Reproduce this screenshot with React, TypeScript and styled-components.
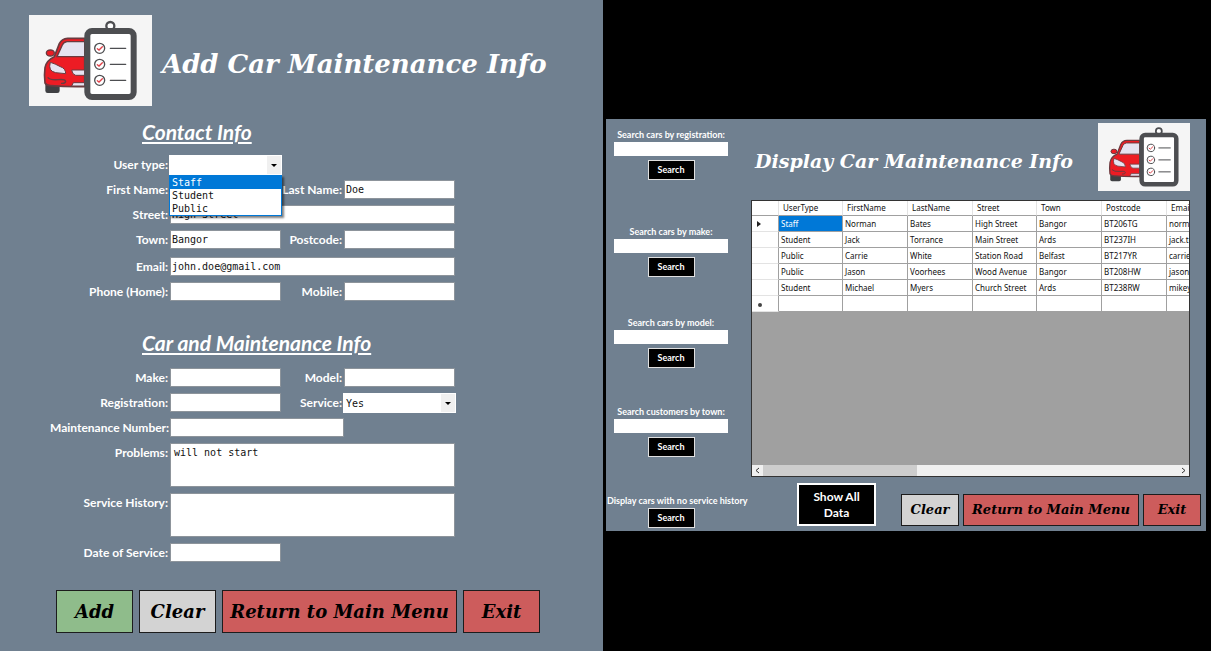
import React from 'react';
import styled, { createGlobalStyle, css } from 'styled-components';

const slate = '#708090';
const labelFont = 'Lato, sans-serif';
const monoFont = "'DejaVu Sans Mono', monospace";
const scriptFont = "'DejaVu Serif', serif";
const gridFont = "'Noto Sans', sans-serif";

const GlobalStyle = createGlobalStyle`
  *, *::before, *::after { box-sizing: border-box; }
  body { margin: 0; background: #000; }
`;

const Page = styled.div`
  display: grid;
  grid-template-columns: minmax(0, 603fr) minmax(0, 608fr);
  min-height: 100vh;
  background: #000;
`;

/* ---------- Shared ---------- */

const LogoSvg = styled.svg<{ $width: number }>`
  display: block;
  flex: none;
  width: ${(p) => p.$width}px;
  height: auto;
  background: #f5f5f5;
`;

const Title = styled.h1<{ $size: number }>`
  margin: 0;
  padding-top: 7px;
  font: italic bold ${(p) => p.$size}px/32px ${scriptFont};
  color: #fff;
  white-space: nowrap;
`;

const tones = { green: '#8fbc8b', grey: '#d3d3d3', red: '#cd5c5c' };

const ScriptButton = styled.button<{ $tone: keyof typeof tones; $width: number; $compact?: boolean }>`
  flex: 0 1 ${(p) => p.$width}px;
  height: ${(p) => (p.$compact ? 32 : 43)}px;
  padding: 0;
  border: 1px solid #1c1c1c;
  background: ${(p) => tones[p.$tone]};
  color: #000;
  font: italic bold ${(p) => (p.$compact ? 13 : 18)}px/20px ${scriptFont};
  white-space: nowrap;
`;

/* ---------- Add form ---------- */

const AddPanel = styled.section`
  padding: 15px 0 18px;
  background: ${slate};
`;

const AddHeader = styled.header`
  display: flex;
  align-items: center;
  gap: 10px;
  padding-left: 29px;
`;

const SectionTitle = styled.h2`
  margin: 0;
  padding-left: 142px;
  font: italic bold 21px/24px Lato, sans-serif;
  color: #fff;
  text-decoration: underline;
  text-decoration-thickness: 2px;
  text-underline-offset: 2px;
`;

const FormSection = styled.form<{ $top: number }>`
  padding-top: ${(p) => p.$top}px;
`;

const Fields = styled.div<{ $top: number }>`
  display: grid;
  grid-template-columns: 120px minmax(0, 1fr) 63px minmax(0, 1fr);
  grid-auto-rows: minmax(19px, auto);
  row-gap: 6px;
  margin: ${(p) => p.$top}px 148px 0 50px;
`;

const Label = styled.label`
  padding-right: 2px;
  font: bold 12px/19px ${labelFont};
  color: #fff;
  text-align: right;
  white-space: nowrap;
`;

const field = css`
  display: block;
  width: 100%;
  border: 1px solid #8d949b;
  border-radius: 0;
  background: #fff;
  color: #111;
  font: 10px/17px ${monoFont};
  outline: none;
`;

const Input = styled.input<{ $span?: number }>`
  ${field}
  grid-column: span ${(p) => p.$span ?? 1};
  height: 19px;
  padding: 0 1px;
`;

const TextArea = styled.textarea`
  ${field}
  grid-column: span 3;
  height: 44px;
  padding: 0 3px;
  resize: none;
`;

const SelectBox = styled.div`
  position: relative;
  margin: 0 -1px;
`;

const Select = styled.select`
  ${field}
  appearance: none;
  height: 20px;
  padding: 0 16px 0 2px;
  border-color: #fff;
`;

const Arrow = styled.svg`
  position: absolute;
  top: 1px;
  right: 1px;
  width: 14px;
  height: 18px;
  background: #f0f0f0;
  pointer-events: none;
`;

const OptionList = styled.ul`
  position: absolute;
  z-index: 1;
  top: 20px;
  left: 0;
  right: 0;
  margin: 0;
  padding: 0;
  list-style: none;
  border: 1px solid #0078d7;
  background: #fff;
  box-shadow: 2px 2px 2px rgba(0, 0, 0, 0.5);
`;

const Option = styled.li<{ $active?: boolean }>`
  padding-left: 2px;
  font: 10px/13px ${monoFont};
  background: ${(p) => (p.$active ? '#0078d7' : '#fff')};
  color: ${(p) => (p.$active ? '#fff' : '#111')};
`;

const AddActions = styled.footer`
  display: flex;
  gap: 6px;
  padding: 28px 16px 0 56px;
`;

/* ---------- Display window ---------- */

const DisplayArea = styled.div`
  padding: 119px 5px 0 3px;
`;

const Window = styled.section`
  display: flex;
  background: ${slate};
`;

const Sidebar = styled.aside`
  flex: 0 0 145px;
  padding-top: 8px;
`;

const Search = styled.form<{ $gap: number }>`
  display: flex;
  flex-direction: column;
  align-items: center;
  width: 130px;
  margin-bottom: ${(p) => p.$gap}px;
`;

const SearchLabel = styled.label`
  font: bold 9px/15px ${labelFont};
  color: #fff;
  white-space: nowrap;
`;

const HistoryLabel = styled(SearchLabel)`
  align-self: flex-start;
  padding-left: 1px;
`;

const SearchInput = styled.input`
  width: 114px;
  height: 14px;
  margin-bottom: 4px;
  padding: 0 2px;
  border: 0;
  font: 10px/14px ${monoFont};
`;

const SearchButton = styled.button`
  width: 47px;
  height: 20px;
  padding: 0;
  border: 1px solid #e0e0e0;
  background: #000;
  color: #fff;
  font: bold 9px/16px ${labelFont};
`;

const Main = styled.div`
  flex: 1;
  min-width: 0;
`;

const DisplayHeader = styled.header`
  display: flex;
  align-items: center;
  justify-content: space-between;
  padding: 4px 16px 9px 4px;
`;

const GridFrame = styled.div`
  display: flex;
  flex-direction: column;
  height: 277px;
  margin-right: 16px;
  border: 1px solid #333;
  background: #a0a0a0;
  overflow: hidden;
`;

const TableClip = styled.div`
  flex: 1;
  overflow: hidden;
`;

const Table = styled.table`
  table-layout: fixed;
  width: 480px;
  border-collapse: separate;
  border-spacing: 0;
  background: #fff;
  font: 8px/15px ${gridFont};
  color: #111;
`;

const Col = styled.col<{ $width: number }>`
  width: ${(p) => p.$width}px;
`;

const HeadCell = styled.th`
  height: 15px;
  padding: 0 0 0 4px;
  border-right: 1px solid #e3e3e3;
  border-bottom: 1px solid #a0a0a0;
  font-weight: normal;
  line-height: 14px;
  text-align: left;
`;

const Cell = styled.td<{ $selected?: boolean }>`
  height: 16px;
  padding: 0 0 0 2px;
  border-right: 1px solid #a0a0a0;
  border-bottom: 1px solid #a0a0a0;
  background: ${(p) => (p.$selected ? '#0078d7' : '#fff')};
  color: ${(p) => (p.$selected ? '#fff' : 'inherit')};
  white-space: nowrap;
`;

const RowMark = styled.td`
  padding: 0 0 0 5px;
  border-right: 1px solid #a0a0a0;
  border-bottom: 1px solid #e3e3e3;
`;

const MarkSvg = styled.svg`
  display: block;
`;

const ScrollBar = styled.div`
  display: flex;
  align-items: center;
  height: 11px;
  background: #f0f0f0;
`;

const ScrollButton = styled.button`
  display: grid;
  place-items: center;
  width: 11px;
  height: 11px;
  padding: 0;
  border: 0;
  background: none;
`;

const Track = styled.div`
  flex: 1;
  height: 100%;
`;

const Thumb = styled.div`
  width: 37%;
  height: 100%;
  background: #cdcdcd;
`;

const DisplayActions = styled.footer`
  display: flex;
  align-items: flex-end;
  justify-content: space-between;
  padding: 6px 4px 5px 46px;
`;

const ShowAll = styled.button`
  width: 79px;
  height: 43px;
  padding: 0 12px;
  border: 2px solid #fff;
  background: #000;
  color: #fff;
  font: bold 12px/16px ${labelFont};
`;

const ButtonRow = styled.div`
  display: flex;
  flex: 0 1 301px;
  gap: 4px;
`;

/* ---------- Components ---------- */

const Logo = ({ width }: { width: number }) => (
  <LogoSvg $width={width} viewBox="0 0 369 273" role="img" aria-label="Car maintenance">
    <rect x="49" y="200" width="43" height="34" rx="7" fill="#3f4043" />
    <path
      d="M167 70H116Q98 71 91 86L76 125Q52 136 48 158Q45 180 48 204Q52 211 64 212Q110 216 167 215Z"
      fill="#ed1c24"
      stroke="#6b3a3f"
      strokeWidth="5"
    />
    <ellipse cx="64" cy="114" rx="12" ry="9" fill="#ed1c24" stroke="#6b3a3f" strokeWidth="4" />
    <path d="M167 80H114Q104 81 100 90L84 125H167Z" fill="#e6e3f0" stroke="#6b3a3f" strokeWidth="4" />
    <path d="M64 142Q56 168 80 173L110 176Q110 160 94 155Q78 146 64 142Z" fill="#e6e3f0" stroke="#6b3a3f" strokeWidth="3" />
    <path d="M167 165H128Q130 179 140 181H167Z" fill="#e6e3f0" stroke="#6b3a3f" strokeWidth="3" />
    <path d="M56 187Q64 196 88 194Q108 192 110 199Q109 206 96 205" fill="none" stroke="#6b3a3f" strokeWidth="4" />
    <path d="M167 203H133L128 213H167Z" fill="#e6e3f0" stroke="#6b3a3f" strokeWidth="3" />
    <circle cx="244" cy="33" r="12" fill="#fff" stroke="#4d4e51" strokeWidth="7" />
    <rect x="175" y="48" width="139" height="198" rx="14" fill="#fff" stroke="#4d4e51" strokeWidth="18" />
    {[100, 148, 196].map((y) => (
      <g key={y} fill="none" strokeLinecap="round">
        <circle cx="212" cy={y} r="15" stroke="#4d4e51" strokeWidth="4" />
        <path d={`M205 ${y + 1}L210 ${y + 5}L220 ${y - 5}`} stroke="#e04048" strokeWidth="4" />
        <path d={`M244 ${y}H290`} stroke="#4d4e51" strokeWidth="4" />
      </g>
    ))}
  </LogoSvg>
);

const DropArrow = () => (
  <Arrow viewBox="0 0 14 18" aria-hidden="true">
    <path d="M4 8H10L7 11Z" fill="#000" />
  </Arrow>
);

type FieldProps = { id: string; label: string; value?: string; span?: number };

const TextField = ({ id, label, value = '', span }: FieldProps) => (
  <>
    <Label htmlFor={id}>{label}</Label>
    <Input id={id} defaultValue={value} $span={span} />
  </>
);

const AreaField = ({ id, label, value = '' }: FieldProps) => (
  <>
    <Label htmlFor={id}>{label}</Label>
    <TextArea id={id} defaultValue={value} />
  </>
);

const searches = [
  { id: 'by-registration', label: 'Search cars by registration:', gap: 44 },
  { id: 'by-make', label: 'Search cars by make:', gap: 38 },
  { id: 'by-model', label: 'Search cars by model:', gap: 36 },
  { id: 'by-town', label: 'Search customers by town:', gap: 36 },
];

const columns = ['UserType', 'FirstName', 'LastName', 'Street', 'Town', 'Postcode', 'Email'];
const columnWidths = [27, 64, 65, 65, 64, 65, 65, 65];
const rows = [
  ['Staff', 'Norman', 'Bates', 'High Street', 'Bangor', 'BT206TG', 'norman.bates'],
  ['Student', 'Jack', 'Torrance', 'Main Street', 'Ards', 'BT237IH', 'jack.torrance'],
  ['Public', 'Carrie', 'White', 'Station Road', 'Belfast', 'BT217YR', 'carrie.white'],
  ['Public', 'Jason', 'Voorhees', 'Wood Avenue', 'Bangor', 'BT208HW', 'jason.voorhees'],
  ['Student', 'Michael', 'Myers', 'Church Street', 'Ards', 'BT238RW', 'mikey.myers'],
  ['', '', '', '', '', '', ''],
];

const RowMarker = ({ index }: { index: number }) => (
  <RowMark>
    {index === 0 && (
      <MarkSvg width="6" height="8" aria-hidden="true">
        <path d="M0 1L4 4L0 7Z" fill="#222" />
      </MarkSvg>
    )}
    {index === rows.length - 1 && (
      <MarkSvg width="6" height="8" aria-hidden="true">
        <circle cx="3" cy="5" r="2" fill="#444" />
      </MarkSvg>
    )}
  </RowMark>
);

const AddForm = () => (
  <AddPanel>
    <AddHeader>
      <Logo width={123} />
      <Title $size={26}>Add Car Maintenance Info</Title>
    </AddHeader>
    <FormSection $top={14}>
      <SectionTitle>Contact Info</SectionTitle>
      <Fields $top={11}>
        <Label htmlFor="user-type">User type:</Label>
        <SelectBox>
          <Select id="user-type" defaultValue="">
            <option value="" />
            <option>Staff</option>
            <option>Student</option>
            <option>Public</option>
          </Select>
          <DropArrow />
          <OptionList role="listbox" aria-label="User type">
            <Option role="option" aria-selected="true" $active>Staff</Option>
            <Option role="option" aria-selected="false">Student</Option>
            <Option role="option" aria-selected="false">Public</Option>
          </OptionList>
        </SelectBox>
      </Fields>
      <Fields $top={5}>
        <TextField id="first-name" label="First Name:" />
        <TextField id="last-name" label="Last Name:" value="Doe" />
        <TextField id="street" label="Street:" value="High Street" span={3} />
        <TextField id="town" label="Town:" value="Bangor" />
        <TextField id="postcode" label="Postcode:" />
      </Fields>
      <Fields $top={8}>
        <TextField id="email" label="Email:" value="john.doe@gmail.com" span={3} />
        <TextField id="phone" label="Phone (Home):" />
        <TextField id="mobile" label="Mobile:" />
      </Fields>
    </FormSection>
    <FormSection $top={30}>
      <SectionTitle>Car and Maintenance Info</SectionTitle>
      <Fields $top={13}>
        <TextField id="make" label="Make:" />
        <TextField id="model" label="Model:" />
        <TextField id="registration" label="Registration:" />
        <Label htmlFor="service">Service:</Label>
        <SelectBox>
          <Select id="service" defaultValue="Yes">
            <option>Yes</option>
            <option>No</option>
          </Select>
          <DropArrow />
        </SelectBox>
      </Fields>
      <Fields $top={5}>
        <TextField id="number" label="Maintenance Number:" span={2} />
      </Fields>
      <Fields $top={6}>
        <AreaField id="problems" label="Problems:" value="will not start" />
        <AreaField id="history" label="Service History:" />
        <TextField id="date" label="Date of Service:" />
      </Fields>
    </FormSection>
    <AddActions>
      <ScriptButton $tone="green" $width={77}>Add</ScriptButton>
      <ScriptButton $tone="grey" $width={77}>Clear</ScriptButton>
      <ScriptButton $tone="red" $width={235}>Return to Main Menu</ScriptButton>
      <ScriptButton $tone="red" $width={77}>Exit</ScriptButton>
    </AddActions>
  </AddPanel>
);

const DisplayWindow = () => (
  <Window>
    <Sidebar>
      {searches.map((s) => (
        <Search key={s.id} $gap={s.gap}>
          <SearchLabel htmlFor={s.id}>{s.label}</SearchLabel>
          <SearchInput id={s.id} />
          <SearchButton type="button">Search</SearchButton>
        </Search>
      ))}
      <Search $gap={0}>
        <HistoryLabel htmlFor="no-history">Display cars with no service history</HistoryLabel>
        <SearchButton id="no-history" type="button">Search</SearchButton>
      </Search>
    </Sidebar>
    <Main>
      <DisplayHeader>
        <Title $size={19}>Display Car Maintenance Info</Title>
        <Logo width={92} />
      </DisplayHeader>
      <GridFrame>
        <TableClip>
          <Table>
            <colgroup>
              {columnWidths.map((w, i) => <Col key={i} $width={w} />)}
            </colgroup>
            <thead>
              <tr>
                <HeadCell />
                {columns.map((c) => <HeadCell key={c}>{c}</HeadCell>)}
              </tr>
            </thead>
            <tbody>
              {rows.map((row, r) => (
                <tr key={r}>
                  <RowMarker index={r} />
                  {row.map((text, c) => (
                    <Cell key={c} $selected={r === 0 && c === 0}>{text}</Cell>
                  ))}
                </tr>
              ))}
            </tbody>
          </Table>
        </TableClip>
        <ScrollBar>
          <ScrollButton type="button" aria-label="Scroll left">
            <svg width="5" height="7"><path d="M4 1L1 3.5L4 6" fill="none" stroke="#333" /></svg>
          </ScrollButton>
          <Track><Thumb /></Track>
          <ScrollButton type="button" aria-label="Scroll right">
            <svg width="5" height="7"><path d="M1 1L4 3.5L1 6" fill="none" stroke="#333" /></svg>
          </ScrollButton>
        </ScrollBar>
      </GridFrame>
      <DisplayActions>
        <ShowAll type="button">Show All Data</ShowAll>
        <ButtonRow>
          <ScriptButton $tone="grey" $width={58} $compact>Clear</ScriptButton>
          <ScriptButton $tone="red" $width={176} $compact>Return to Main Menu</ScriptButton>
          <ScriptButton $tone="red" $width={58} $compact>Exit</ScriptButton>
        </ButtonRow>
      </DisplayActions>
    </Main>
  </Window>
);

export default function App() {
  return (
    <Page>
      <GlobalStyle />
      <AddForm />
      <DisplayArea>
        <DisplayWindow />
      </DisplayArea>
    </Page>
  );
}
